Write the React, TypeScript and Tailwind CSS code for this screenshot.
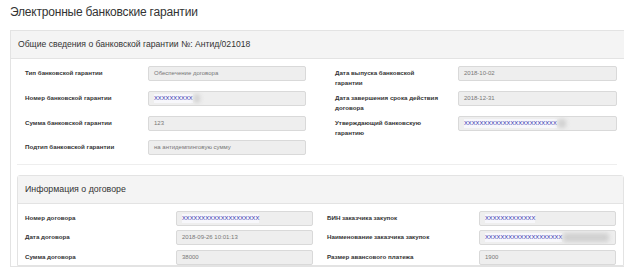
import React from "react";

const F = { fontFamily: '"Liberation Sans", Arial, sans-serif' };

function Field({ value, blue, smear }: { value: string; blue?: boolean; smear?: number }) {
  return (
    <div className="relative h-[15px] flex-1 overflow-hidden rounded-[2px] border border-[#d9d9d9] bg-[#eeeeee] pl-[5px] flex items-center">
      {blue ? (
        <span className="relative text-[5.8px] text-[#3535b0] bg-[#f7f7fb]">{value}</span>
      ) : (
        <span className="text-[6px] text-[#777]">{value}</span>
      )}
      {smear ? (
        <span className="ml-[1px] h-[9px] rounded-[3px] bg-[#d0d0d0] blur-[2px]" style={{ width: smear }} />
      ) : null}
    </div>
  );
}

function Row({ label, lw, children, extra }: { label: React.ReactNode; lw: string; children: React.ReactNode; extra?: string }) {
  return (
    <div className={"flex h-[15px] items-start " + (extra ?? "")}>
      <div className={"shrink-0 pt-[2px] text-[6.2px] font-bold leading-[10px] text-[#333] " + lw}>{label}</div>
      {children}
    </div>
  );
}

export default function App() {
  return (
    <div className="h-[272px] w-[624px] overflow-hidden bg-white pl-[10px]" style={F}>
      <h1 className="pt-[4px] text-[12px] tracking-[-0.2px] font-normal leading-[16px] text-[#333]">Электронные банковские гарантии</h1>
      <div className="mt-[10px] w-[640px] border border-[#e3e3e3]">
        <div className="h-[28px] border-b border-[#e3e3e3] bg-[#f4f4f4] pl-[7px] flex items-center text-[8.6px] text-[#333]">
          Общие сведения о банковской гарантии №: Антид/021018
        </div>
        <div className="pl-[6px]">
          <div className="w-[600px] border-b border-[#eeeeee] pl-[8px] pt-[7px] pb-[9px] flex gap-[29px]">
            <div className="w-[281px] flex flex-col gap-[10px]">
              <Row lw="w-[123px]" label="Тип банковской гарантии"><Field value="Обеспечение договора" /></Row>
              <Row lw="w-[123px]" label="Номер банковской гарантии"><Field value="XXXXXXXXXX" blue smear={6} /></Row>
              <Row lw="w-[123px]" label="Сумма банковской гарантии"><Field value="123" /></Row>
              <Row lw="w-[123px]" label="Подтип банковской гарантии" extra="-mt-[1px]"><Field value="на антидемпинговую сумму" /></Row>
            </div>
            <div className="w-[282px] flex flex-col gap-[10px]">
              <Row lw="w-[123px]" label={<>Дата выпуска банковской<br />гарантии</>}><Field value="2018-10-02" /></Row>
              <Row lw="w-[123px]" label={<>Дата завершения срока действия<br />договора</>}><Field value="2018-12-31" /></Row>
              <Row lw="w-[123px]" label={<>Утверждающий банковскую<br />гарантию</>}><Field value="XXXXXXXXXXXXXXXXXXXXXXXX" blue smear={8} /></Row>
            </div>
          </div>
          <div className="mt-[10px] w-[607px] rounded-t-[3px] border border-[#e3e3e3]">
            <div className="h-[28px] border-b border-[#e3e3e3] bg-[#f4f4f4] pl-[7px] flex items-center text-[8.8px] text-[#333]">
              Информация о договоре
            </div>
            <div className="pl-[7px] pt-[7px] flex gap-[14px]">
              <div className="w-[288px] flex flex-col gap-[5px]">
                <Row lw="w-[151px]" label="Номер договора" extra="-mb-[1px]"><Field value="XXXXXXXXXXXXXXXXXXXX" blue /></Row>
                <Row lw="w-[151px]" label="Дата договора"><Field value="2018-09-26 10:01:13" /></Row>
                <Row lw="w-[151px]" label="Сумма договора"><Field value="38000" /></Row>
              </div>
              <div className="w-[289px] flex flex-col gap-[5px]">
                <Row lw="w-[152px]" label="БИН заказчика закупок" extra="-mb-[1px]"><Field value="XXXXXXXXXXXXX" blue /></Row>
                <Row lw="w-[152px]" label="Наименование заказчика закупок"><Field value="XXXXXXXXXXXXXXXXXXXX" blue smear={46} /></Row>
                <Row lw="w-[152px]" label="Размер авансового платежа"><Field value="1900" /></Row>
              </div>
            </div>
          </div>
        </div>
      </div>
    </div>
  );
}
